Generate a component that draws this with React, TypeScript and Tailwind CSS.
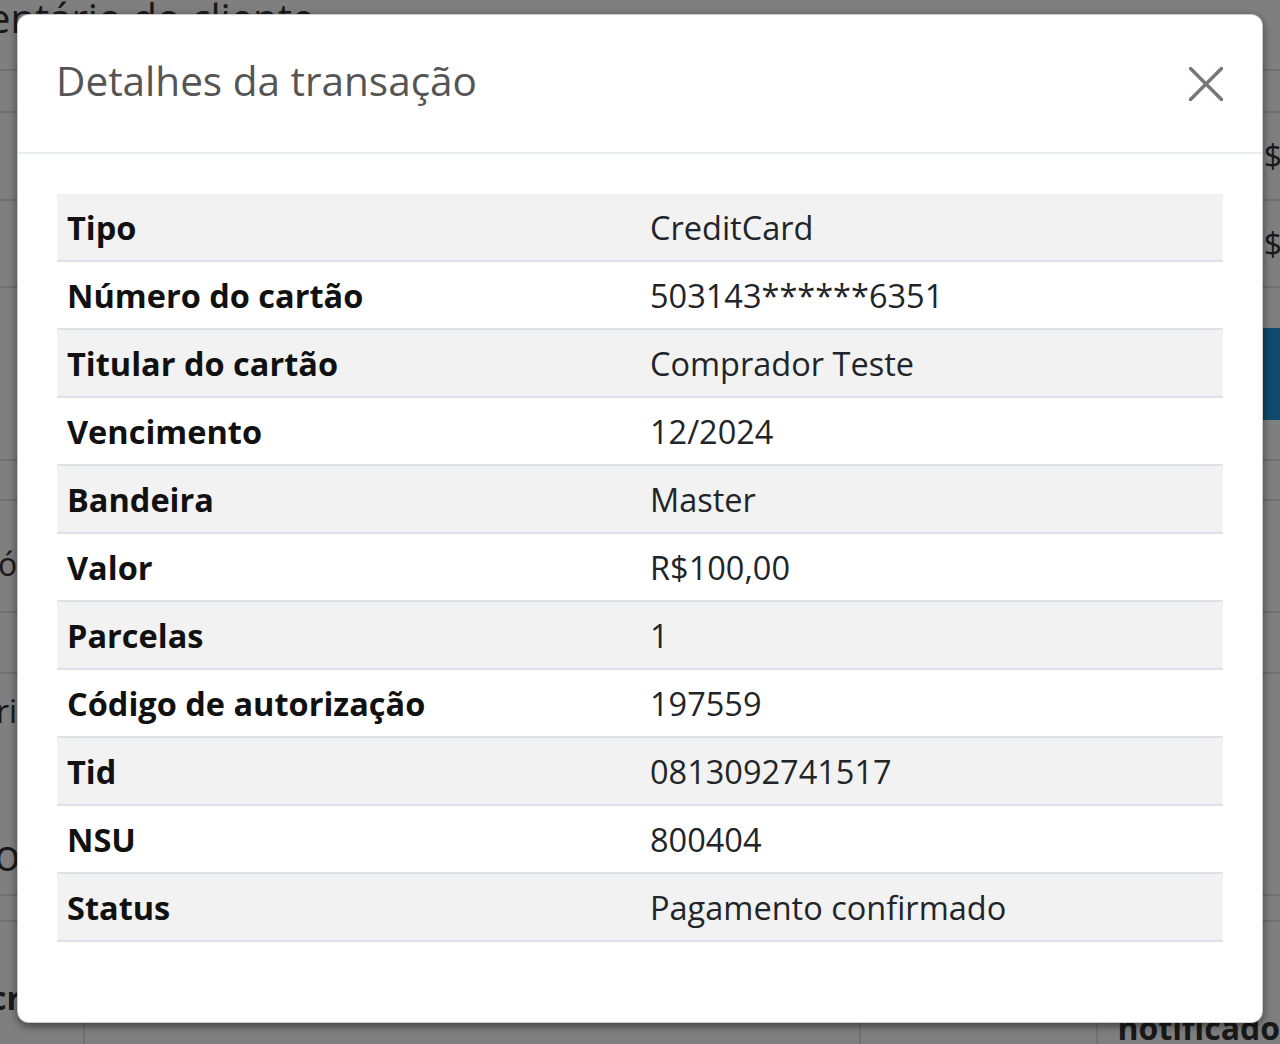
import React from "react";

const rows: [string, string][] = [
  ["Tipo", "CreditCard"],
  ["Número do cartão", "503143******6351"],
  ["Titular do cartão", "Comprador Teste"],
  ["Vencimento", "12/2024"],
  ["Bandeira", "Master"],
  ["Valor", "R$100,00"],
  ["Parcelas", "1"],
  ["Código de autorização", "197559"],
  ["Tid", "0813092741517"],
  ["NSU", "800404"],
  ["Status", "Pagamento confirmado"],
];

function Background() {
  return (
    <div className="h-[1044px] w-full overflow-hidden bg-white text-[#333]" style={{ fontFamily: '"Open Sans", sans-serif' }}>
      <div className="flex h-[71px] items-start border-b-2 border-[#dee2e6]">
        <div className="-ml-[12px] -mt-[12px] text-[40px] leading-[60px]">entário do cliente</div>
      </div>
      <div className="h-[42px] border-b-2 border-[#dee2e6]" />
      <div className="flex h-[88px] items-center justify-end border-b-2 border-[#dee2e6]">
        <span className="-mr-[2px] text-[32px]">$</span>
      </div>
      <div className="flex h-[87px] items-center justify-end border-b-2 border-[#dee2e6]">
        <span className="-mr-[2px] text-[32px]">$</span>
      </div>
      <div className="flex h-[173px] items-center justify-end border-b-2 border-[#dee2e6]">
        <div className="flex h-[92px] w-[60px] items-center bg-[#1e95d6] pl-[3px] text-[32px] text-white">n</div>
      </div>
      <div className="h-[40px] border-b-2 border-[#dee2e6]" />
      <div className="flex h-[112px] items-center border-b-2 border-[#dee2e6] pt-[16px]">
        <span className="-ml-[2px] text-[32px]">ó</span>
      </div>
      <div className="h-[61px] border-b-2 border-[#dee2e6]" />
      <div className="flex h-[74px] items-center">
        <span className="-ml-[4px] text-[32px]">ri</span>
      </div>
      <div className="flex h-[148px] items-center border-b-2 border-[#dee2e6] pt-[66px]">
        <span className="-ml-[6px] text-[44px]">oh</span>
      </div>
      <div className="h-[26px] border-b-2 border-[#dee2e6]" />
      <div className="flex h-[200px]">
        <div className="w-[86px] border-r-2 border-[#dee2e6] pt-[52px]">
          <span className="-ml-[10px] text-[32px] font-bold leading-[48px]">cr</span>
        </div>
        <div className="w-[782px] border-r-2 border-[#dee2e6]" />
        <div className="w-[238px] border-r-2 border-[#dee2e6]" />
        <div className="pl-[20px] pt-[82px] text-[32px] font-bold leading-[48px]">notificado</div>
      </div>
    </div>
  );
}

export default function App() {
  return (
    <div className="relative h-[1044px] w-[1280px] overflow-hidden" style={{ fontFamily: '"Open Sans", sans-serif' }}>
      <Background />
      <div className="absolute inset-0 bg-black/50" />
      <div className="absolute inset-0 flex items-start pl-[17px] pt-[14px]">
        <div className="flex h-[1009px] w-[1246px] flex-col rounded-[12px] border border-black/20 bg-white shadow-[0_3px_9px_rgba(0,0,0,0.5)]">
          <div className="flex h-[139px] shrink-0 items-center justify-between border-b-2 border-[#e9ecef] px-[39px]">
            <h4 className="-ml-[1px] -mt-[4px] text-[40.5px] font-normal leading-none text-[#555555]">Detalhes da transação</h4>
            <button className="flex h-[34px] w-[34px] items-center justify-center" aria-label="Fechar">
              <svg width="34" height="34" viewBox="0 0 34 34">
                <path d="M1.5 1.5 L32.5 32.5 M32.5 1.5 L1.5 32.5" stroke="#777777" strokeWidth="3.5" strokeLinecap="round" fill="none" />
              </svg>
            </button>
          </div>
          <div className="px-[39px] pt-[40px]">
            <div className="flex flex-col">
              {rows.map(([label, value], i) => (
                <div
                  key={label}
                  className={`flex h-[68px] items-center border-b-2 border-[#dee2e6] pt-[2px] ${i % 2 === 0 ? "bg-[#f2f2f2]" : "bg-white"}`}
                >
                  <div className="w-1/2 px-[10px] text-[32.5px] font-bold leading-[48px] text-[#111111]">{label}</div>
                  <div className="w-1/2 px-[10px] text-[32.5px] leading-[48px] text-[#212529]">{value}</div>
                </div>
              ))}
            </div>
          </div>
        </div>
      </div>
    </div>
  );
}
